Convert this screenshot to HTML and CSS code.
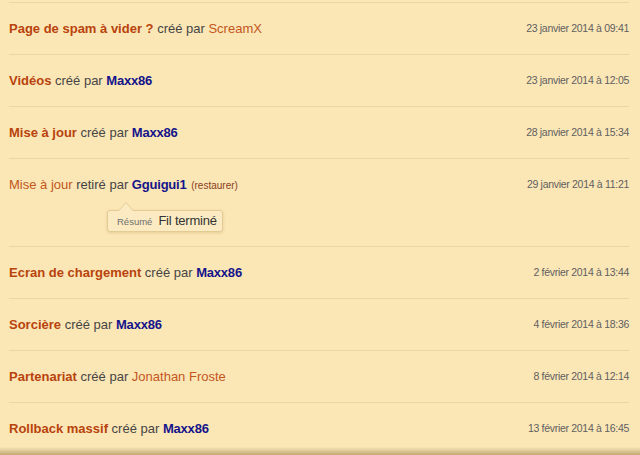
FILE: index.html
```html
<!DOCTYPE html>
<html lang="fr">
<head>
<meta charset="utf-8">
<title>Historique</title>
<link rel="stylesheet" href="styles.css">
</head>
<body>
<ul class="log">
  <li class="row">
    <div class="line">
      <span class="desc"><a class="title">Page de spam à vider ?</a> créé par <a class="user anon">ScreamX</a></span>
      <span class="date">23 janvier 2014 à 09:41</span>
    </div>
  </li>
  <li class="row">
    <div class="line">
      <span class="desc"><a class="title">Vidéos</a> créé par <a class="user">Maxx86</a></span>
      <span class="date">23 janvier 2014 à 12:05</span>
    </div>
  </li>
  <li class="row">
    <div class="line">
      <span class="desc"><a class="title">Mise à jour</a> créé par <a class="user">Maxx86</a></span>
      <span class="date">28 janvier 2014 à 15:34</span>
    </div>
  </li>
  <li class="row row-removed">
    <div class="line">
      <span class="desc"><a class="title removed">Mise à jour</a> retiré par <a class="user">Gguigui1</a> <a class="restore">(restaurer)</a></span>
      <span class="date">29 janvier 2014 à 11:21</span>
    </div>
    <div class="summary"><span class="summary-label">Résumé</span><span class="summary-text">Fil terminé</span></div>
  </li>
  <li class="row">
    <div class="line">
      <span class="desc"><a class="title">Ecran de chargement</a> créé par <a class="user">Maxx86</a></span>
      <span class="date">2 février 2014 à 13:44</span>
    </div>
  </li>
  <li class="row">
    <div class="line">
      <span class="desc"><a class="title">Sorcière</a> créé par <a class="user">Maxx86</a></span>
      <span class="date">4 février 2014 à 18:36</span>
    </div>
  </li>
  <li class="row">
    <div class="line">
      <span class="desc"><a class="title">Partenariat</a> créé par <a class="user anon">Jonathan Froste</a></span>
      <span class="date">8 février 2014 à 12:14</span>
    </div>
  </li>
  <li class="row">
    <div class="line">
      <span class="desc"><a class="title">Rollback massif</a> créé par <a class="user">Maxx86</a></span>
      <span class="date">13 février 2014 à 16:45</span>
    </div>
  </li>
</ul>
<div class="bottom-shade"></div>
</body>
</html>
```

FILE: styles.css
```css
html, body {
  margin: 0;
  padding: 0;
  background: #fbe6b6;
  font-family: "Liberation Sans", Arial, sans-serif;
  font-size: 13px;
  color: #454545;
  overflow: hidden;
}

.log {
  list-style: none;
  margin: 0;
  padding: 2px 11px 0 9px;
}

.row {
  border-top: 1px solid #ebd5a2;
  padding: 18px 0;
}

.row-removed {
  padding-bottom: 14px;
}

.line {
  display: flex;
  justify-content: space-between;
  align-items: center;
  height: 15px;
  line-height: 15px;
}

.title {
  color: #b8430c;
  font-weight: bold;
}

.title.removed {
  font-weight: normal;
  color: #c2561a;
}

.user {
  color: #14148a;
  font-weight: bold;
  letter-spacing: -0.2px;
}

.user.anon {
  color: #c4561c;
  font-weight: normal;
  letter-spacing: 0;
}

.restore {
  font-size: 10px;
  color: #8a3d1c;
  margin-left: 1px;
}

.date {
  font-size: 10.5px;
  letter-spacing: -0.3px;
  color: #5f5f5f;
}

.summary {
  position: relative;
  display: inline-flex;
  align-items: baseline;
  gap: 6px;
  margin: 18px 0 0 98px;
  height: 20px;
  line-height: 20px;
  padding: 0 5px 0 9px;
  background: #fcebc2;
  border: 1px solid #e3cb94;
  border-radius: 3px;
  box-shadow: 0 1px 3px rgba(170, 130, 50, 0.25);
}

.summary::before,
.summary::after {
  content: "";
  position: absolute;
  left: 10px;
  width: 0;
  height: 0;
  border-left: 8px solid transparent;
  border-right: 8px solid transparent;
}

.summary::before {
  top: -9px;
  border-bottom: 9px solid #e3cb94;
}

.summary::after {
  top: -8px;
  border-bottom: 9px solid #fcebc2;
}

.summary-label {
  font-size: 9.5px;
  color: #6e6e6e;
}

.summary-text {
  font-size: 13px;
  letter-spacing: -0.2px;
  color: #333;
}

.bottom-shade {
  position: fixed;
  left: 0;
  right: 0;
  bottom: 0;
  height: 8px;
  background: linear-gradient(rgba(120, 95, 40, 0), rgba(120, 95, 40, 0.45));
  pointer-events: none;
}
```
